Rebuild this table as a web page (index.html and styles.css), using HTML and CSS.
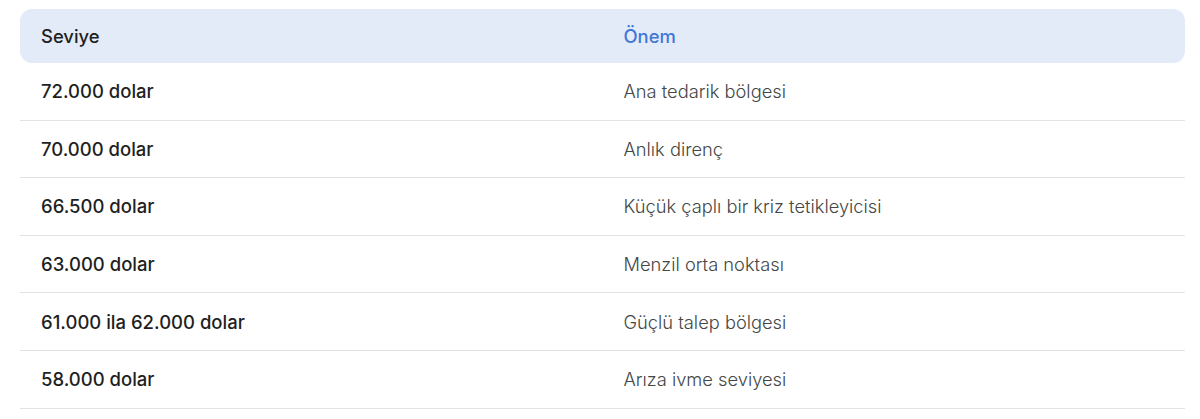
FILE: index.html
```html
<!DOCTYPE html>
<html lang="tr">
<head>
<meta charset="utf-8">
<link rel="stylesheet" href="styles.css">
</head>
<body>
<table class="levels">
  <thead>
    <tr><th>Seviye</th><th class="accent">Önem</th></tr>
  </thead>
  <tbody>
    <tr><td>72.000 dolar</td><td>Ana tedarik bölgesi</td></tr>
    <tr><td>70.000 dolar</td><td>Anlık direnç</td></tr>
    <tr><td>66.500 dolar</td><td>Küçük çaplı bir kriz tetikleyicisi</td></tr>
    <tr><td>63.000 dolar</td><td>Menzil orta noktası</td></tr>
    <tr><td>61.000 ila 62.000 dolar</td><td>Güçlü talep bölgesi</td></tr>
    <tr><td>58.000 dolar</td><td>Arıza ivme seviyesi</td></tr>
  </tbody>
</table>
</body>
</html>
```
FILE: styles.css
```css
html, body {
  margin: 0;
  padding: 0;
  background: #ffffff;
}
body {
  padding: 9px 15px 0 20px;
  font-family: "Inter", "Noto Sans", sans-serif;
  color: #1f1f1f;
}
.levels {
  width: 1165px;
  border-collapse: separate;
  border-spacing: 0;
  table-layout: fixed;
}
.levels th,
.levels td {
  text-align: left;
  padding: 0 21px;
  font-size: 18.4px;
  line-height: 24px;
}
.levels th {
  height: 54px;
  background: #e4ebf8;
  font-weight: 500;
  color: #1f1f1f;
}
.levels th:first-child { border-radius: 12px 0 0 12px; }
.levels th:last-child { border-radius: 0 12px 12px 0; }
.levels th.accent { color: #3f78d8; }
.levels td {
  height: 57.6px;
  box-sizing: border-box;
  border-bottom: 1px solid #e3e3e3;
}
.levels td:first-child {
  font-weight: 500;
  font-size: 18.5px;
  color: #1f1f1f;
}
.levels td:last-child {
  font-weight: 300;
  font-size: 18.3px;
  color: #444746;
}
```
